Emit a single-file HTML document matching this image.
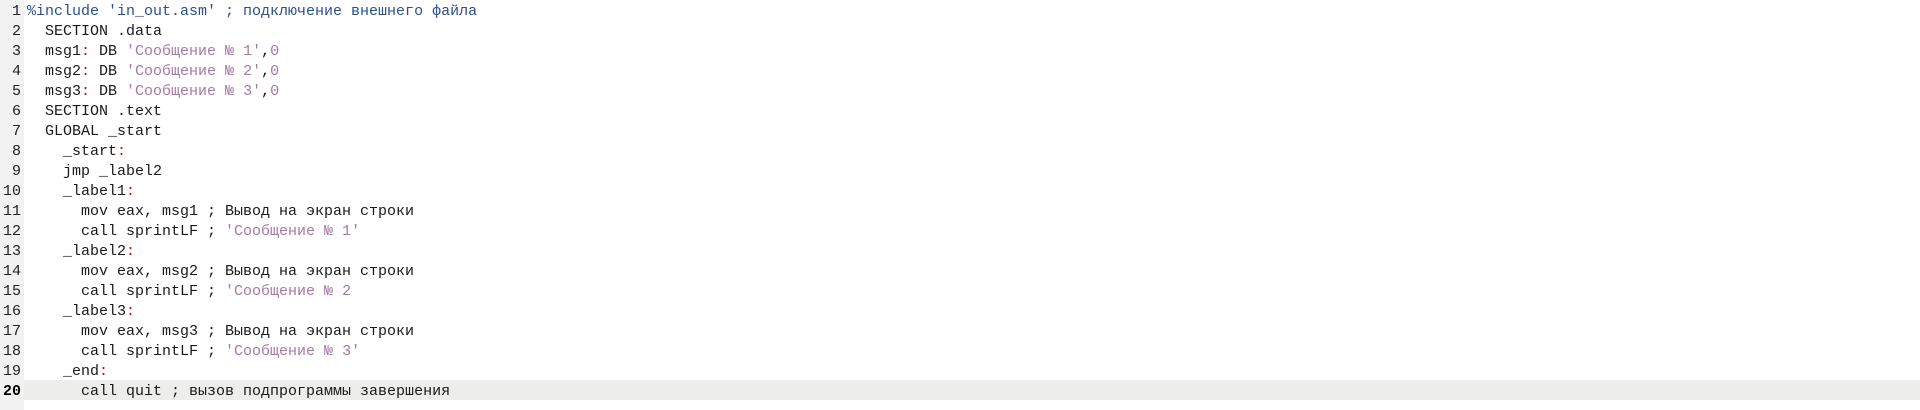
<!DOCTYPE html>
<html><head><meta charset="utf-8"><style>
html,body{margin:0;padding:0;background:#fff;width:1920px;height:410px;overflow:hidden}
.wrap{position:relative;font-family:"Liberation Mono","DejaVu Sans Mono",monospace;font-size:15px;line-height:20px;color:#1a1a1a}
.g{position:absolute;left:0;top:0;width:24px;height:410px;background:#f2f2f2}
.l{position:relative;height:20px;white-space:pre}
.n{position:absolute;left:0;top:2px;width:21px;text-align:right;color:#222}
.t{position:absolute;left:27px;top:2px}
.cur{background:#ededec}
.cur .n{font-weight:bold;color:#000}
.b{color:#2b4f91}.s{color:#a67aa3}.r{color:#c01010}
</style></head><body><div class="wrap"><div class="g"></div>
<div class="l"><span class="n">1</span><span class="t b">%include 'in_out.asm' ; подключение внешнего файла</span></div>
<div class="l"><span class="n">2</span><span class="t">  SECTION .data</span></div>
<div class="l"><span class="n">3</span><span class="t">  msg1<span class="r">:</span> DB <span class="s">'Сообщение № 1'</span>,<span class="s">0</span></span></div>
<div class="l"><span class="n">4</span><span class="t">  msg2<span class="r">:</span> DB <span class="s">'Сообщение № 2'</span>,<span class="s">0</span></span></div>
<div class="l"><span class="n">5</span><span class="t">  msg3<span class="r">:</span> DB <span class="s">'Сообщение № 3'</span>,<span class="s">0</span></span></div>
<div class="l"><span class="n">6</span><span class="t">  SECTION .text</span></div>
<div class="l"><span class="n">7</span><span class="t">  GLOBAL _start</span></div>
<div class="l"><span class="n">8</span><span class="t">    _start<span class="r">:</span></span></div>
<div class="l"><span class="n">9</span><span class="t">    jmp _label2</span></div>
<div class="l"><span class="n">10</span><span class="t">    _label1<span class="r">:</span></span></div>
<div class="l"><span class="n">11</span><span class="t">      mov eax, msg1 ; Вывод на экран строки</span></div>
<div class="l"><span class="n">12</span><span class="t">      call sprintLF ; <span class="s">'Сообщение № 1'</span></span></div>
<div class="l"><span class="n">13</span><span class="t">    _label2<span class="r">:</span></span></div>
<div class="l"><span class="n">14</span><span class="t">      mov eax, msg2 ; Вывод на экран строки</span></div>
<div class="l"><span class="n">15</span><span class="t">      call sprintLF ; <span class="s">'Сообщение № 2</span></span></div>
<div class="l"><span class="n">16</span><span class="t">    _label3<span class="r">:</span></span></div>
<div class="l"><span class="n">17</span><span class="t">      mov eax, msg3 ; Вывод на экран строки</span></div>
<div class="l"><span class="n">18</span><span class="t">      call sprintLF ; <span class="s">'Сообщение № 3'</span></span></div>
<div class="l"><span class="n">19</span><span class="t">    _end<span class="r">:</span></span></div>
<div class="l cur" style="margin-left:24px"><span class="n" style="left:-24px">20</span><span class="t" style="left:3px">      call quit ; вызов подпрограммы завершения</span></div>
</div></body></html>
